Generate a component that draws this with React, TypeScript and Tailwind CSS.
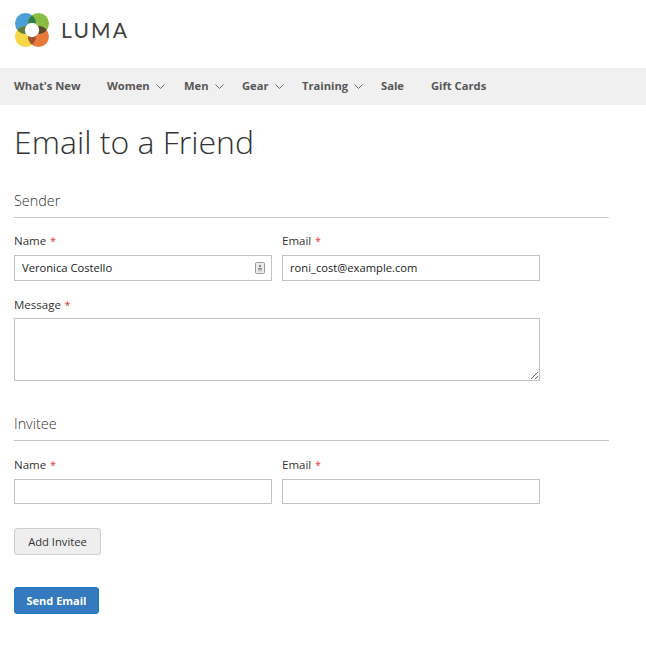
function Chevron() {
  return (
    <svg width="9" height="5" viewBox="0 0 9 5" fill="none" stroke="#6b6b6b" strokeWidth="1" className="ml-[6px] mt-[1px]">
      <path d="M0.5 0.5 L4.5 4.5 L8.5 0.5" />
    </svg>
  );
}

function Logo() {
  return (
    <svg width="36" height="36" viewBox="0 0 36 36">
      <circle cx="11.5" cy="11.5" r="10.5" fill="#4a9fd8" />
      <circle cx="24.5" cy="11.5" r="10.5" fill="#8bbd45" />
      <circle cx="11.5" cy="24.5" r="10.5" fill="#f7d745" />
      <circle cx="24.5" cy="24.5" r="10.5" fill="#e97a3e" />
      <path d="M18 3.3 A10.5 10.5 0 0 1 18 19.7 A10.5 10.5 0 0 1 18 3.3 Z" fill="#2f7d46" />
      <path d="M3.3 18 A10.5 10.5 0 0 1 19.7 18 A10.5 10.5 0 0 1 3.3 18 Z" fill="#5c7f3a" />
      <path d="M16.3 18 A10.5 10.5 0 0 1 32.7 18 A10.5 10.5 0 0 1 16.3 18 Z" fill="#5a4a2c" />
      <path d="M18 16.3 A10.5 10.5 0 0 1 18 32.7 A10.5 10.5 0 0 1 18 16.3 Z" fill="#a0532c" />
      <circle cx="18" cy="18" r="7.2" fill="#fff" />
    </svg>
  );
}

function NavItem({ label, arrow, className }: { label: string; arrow?: boolean; className: string }) {
  return (
    <span className={`flex items-center ${className}`}>
      <span className="text-[11.2px] font-bold text-[#575757]">{label}</span>
      {arrow && <Chevron />}
    </span>
  );
}

function Label({ text }: { text: string }) {
  return (
    <div className="h-[14px] flex items-center text-[11.5px] font-medium leading-[14px] text-[#333]">
      {text}
      <span className="text-[#e02b27] ml-[4px] text-[10px]">*</span>
    </div>
  );
}

function Field({ label, value, icon, short }: { label: string; value?: string; icon?: boolean; short?: boolean }) {
  return (
    <div className="w-[258px]">
      <Label text={label} />
      <div className="relative mt-[7px]">
        <input
          readOnly
          value={value ?? ""}
          className={`block w-[258px] ${short ? "h-[25px]" : "h-[26px]"} border border-[#c2c2c2] bg-white px-[7px] pb-[2px] text-[11.2px] text-[#222] outline-none`}
        />
        {icon && (
          <svg width="10" height="12" viewBox="0 0 10 12" className="absolute right-[7px] top-[7px]">
            <rect x="0.5" y="0.5" width="9" height="11" rx="1" fill="#ececec" stroke="#9a9a9a" />
            <circle cx="5" cy="4" r="1.2" fill="#8a8a8a" />
            <rect x="3" y="6" width="4" height="1.6" fill="#8a8a8a" />
            <rect x="3" y="8.4" width="4" height="0.9" fill="#b0b0b0" />
          </svg>
        )}
      </div>
    </div>
  );
}

function Legend({ text }: { text: string }) {
  return (
    <div className="w-[595px] h-[27px] border-b border-[#c6c6c6] text-[14.4px] font-light leading-[20px] text-[#333]">
      {text}
    </div>
  );
}

export default function App() {
  return (
    <div className="w-[646px] h-[649px] bg-white overflow-hidden font-['Open_Sans',sans-serif]">
      <header className="h-[68px] pl-[14px] pt-[12px] flex items-start">
        <Logo />
        <span className="ml-[11px] mt-[4px] text-[21px] leading-[28px] font-normal tracking-[2.2px] text-[#3d3d3d] font-['Lato',sans-serif]">
          LUMA
        </span>
      </header>
      <nav className="h-[37px] bg-[#f0f0f0] flex items-center pl-[14px]">
        <NavItem label="What's New" className="w-[93px]" />
        <NavItem label="Women" arrow className="w-[77px]" />
        <NavItem label="Men" arrow className="w-[58px]" />
        <NavItem label="Gear" arrow className="w-[60px]" />
        <NavItem label="Training" arrow className="w-[79px]" />
        <NavItem label="Sale" className="w-[50px]" />
        <NavItem label="Gift Cards" className="" />
      </nav>
      <main className="pl-[14px]">
        <h1 className="mt-[15px] text-[32px] leading-[43px] font-light text-[#333]">Email to a Friend</h1>
        <div className="mt-[28px]">
          <Legend text="Sender" />
        </div>
        <div className="mt-[16px] flex gap-[10px]">
          <Field label="Name" value="Veronica Costello" icon />
          <Field label="Email" value="roni_cost@example.com" />
        </div>
        <div className="mt-[17px]">
          <Label text="Message" />
          <textarea
            readOnly
            className="block mt-[6px] w-[526px] h-[63px] border border-[#c2c2c2] bg-white outline-none"
          />
        </div>
        <div className="mt-[33px]">
          <Legend text="Invitee" />
        </div>
        <div className="mt-[17px] flex gap-[10px]">
          <Field label="Name" short />
          <Field label="Email" short />
        </div>
        <button className="block mt-[24px] w-[87px] h-[27px] rounded-[3px] border border-[#cdcdcd] bg-[#eeeeee] pt-[2px] text-[11.2px] font-medium text-[#333]">
          Add Invitee
        </button>
        <button className="block mt-[32px] w-[85px] h-[27px] rounded-[3px] border border-[#1979c3] bg-[#3579bf] pt-[2px] text-[11px] font-bold text-white">
          Send Email
        </button>
      </main>
    </div>
  );
}
